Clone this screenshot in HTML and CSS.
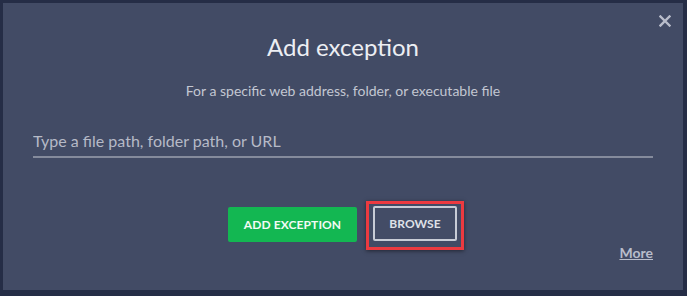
FILE: index.html
```html
<html>
  <head>
    <link rel="stylesheet" href="styles.css">
    <title>Add exception</title>
  </head>
  <body>
    <div class="dialog">
      <button class="close" aria-label="Close">
        <svg width="12" height="12" viewBox="0 0 12 12">
          <path d="M1.5 1.5 L10.5 10.5 M10.5 1.5 L1.5 10.5" stroke="#b9bdcb" stroke-width="2.4" stroke-linecap="square"/>
        </svg>
      </button>
      <h1 class="title">Add exception</h1>
      <p class="subtitle">For a specific web address, folder, or executable file</p>
      <div class="field">
        <input type="text" placeholder="Type a file path, folder path, or URL">
      </div>
      <div class="actions">
        <button class="btn btn-green">ADD EXCEPTION</button>
        <span class="highlight">
          <button class="btn btn-outline">BROWSE</button>
        </span>
      </div>
      <div class="footer">
        <a href="#" class="more">More</a>
      </div>
    </div>
  </body>
</html>
```

FILE: styles.css
```css
body {
  margin: 0;
  background: #252d46;
  font-family: Lato, "Liberation Sans", sans-serif;
  padding: 3px 4px 6px 3px;
  height: 296px;
  box-sizing: border-box;
}

.dialog {
  position: relative;
  background: #424b65;
  height: 287px;
  box-sizing: border-box;
  padding: 29px 30px 0 30px;
  text-align: center;
}

.close {
  position: absolute;
  top: 12px;
  right: 12px;
  background: none;
  border: none;
  padding: 0;
  width: 12px;
  height: 12px;
}

.close svg {
  display: block;
}

.title {
  margin: 0;
  font-size: 24px;
  font-weight: 400;
  color: #eceef3;
  line-height: 30px;
}

.subtitle {
  margin: 21px 0 0 0;
  font-size: 14px;
  color: #c3c7d2;
  line-height: 16px;
}

.field {
  margin-top: 32px;
}

.field input {
  width: 100%;
  box-sizing: border-box;
  background: none;
  border: none;
  border-bottom: 2px solid #858b9c;
  padding: 0 0 6px 0;
  font-family: Lato, "Liberation Sans", sans-serif;
  font-size: 16px;
  color: #e0e2ea;
  outline: none;
}

.field input::placeholder {
  color: #b6bac7;
}

.actions {
  margin-top: 41px;
  display: flex;
  justify-content: center;
  align-items: center;
  gap: 9px;
  padding-left: 6px;
}

.btn {
  font-family: Lato, "Liberation Sans", sans-serif;
  font-size: 12px;
  font-weight: 700;
  letter-spacing: 0.1px;
  height: 35px;
  box-sizing: border-box;
  border-radius: 2px;
  cursor: pointer;
}

.btn-green {
  background: #13b752;
  color: #f2fbf5;
  border: none;
  width: 129px;
}

.btn-outline {
  background: #434c66;
  color: #dfe1e8;
  border: 2px solid #c8ccd6;
  width: 84px;
  display: block;
}

.highlight {
  display: block;
  border: 3px solid #ec3a40;
  padding: 2px 4px 6px 4px;
  box-shadow: 0 1px 4px rgba(0, 0, 0, 0.5);
  margin-top: 2px;
}

.footer {
  text-align: right;
  margin-top: -6px;
}

.more {
  color: #b9bdcb;
  font-size: 14px;
  font-weight: 700;
}
```
